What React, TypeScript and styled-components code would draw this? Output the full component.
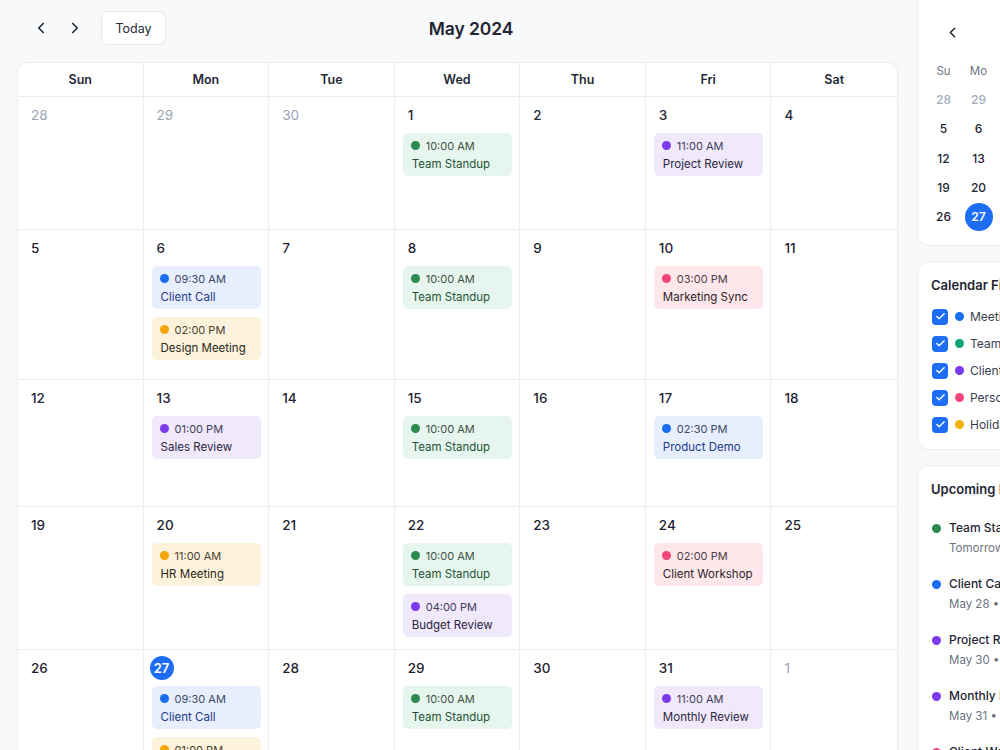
import React from "react";
import styled, { createGlobalStyle } from "styled-components";
import { ChevronLeft, ChevronRight, Check } from "lucide-react";

type Tone = "green" | "blue" | "purple" | "yellow" | "pink";

const tones: Record<Tone, { bg: string; dot: string; title: string; time: string }> = {
  green: { bg: "#e6f6ee", dot: "#2f8a52", title: "#1f5236", time: "#3f5147" },
  blue: { bg: "#e7eefd", dot: "#1a6cf2", title: "#1e3a8a", time: "#3d4a66" },
  purple: { bg: "#f0e9fc", dot: "#7c3aed", title: "#2a2540", time: "#433d57" },
  yellow: { bg: "#fdf3dc", dot: "#f5a50b", title: "#2c2619", time: "#4a4230" },
  pink: { bg: "#fde7eb", dot: "#f0467a", title: "#2b2327", time: "#4d3f45" },
};

type CalEvent = { time: string; title: string; tone: Tone };
type Day = { n: number; out?: boolean; today?: boolean; events?: CalEvent[] };

const standup: CalEvent = { time: "10:00 AM", title: "Team Standup", tone: "green" };

const weeks: { height: number; days: Day[] }[] = [
  {
    height: 133,
    days: [
      { n: 28, out: true },
      { n: 29, out: true },
      { n: 30, out: true },
      { n: 1, events: [standup] },
      { n: 2 },
      { n: 3, events: [{ time: "11:00 AM", title: "Project Review", tone: "purple" }] },
      { n: 4 },
    ],
  },
  {
    height: 150,
    days: [
      { n: 5 },
      {
        n: 6,
        events: [
          { time: "09:30 AM", title: "Client Call", tone: "blue" },
          { time: "02:00 PM", title: "Design Meeting", tone: "yellow" },
        ],
      },
      { n: 7 },
      { n: 8, events: [standup] },
      { n: 9 },
      { n: 10, events: [{ time: "03:00 PM", title: "Marketing Sync", tone: "pink" }] },
      { n: 11 },
    ],
  },
  {
    height: 127,
    days: [
      { n: 12 },
      { n: 13, events: [{ time: "01:00 PM", title: "Sales Review", tone: "purple" }] },
      { n: 14 },
      { n: 15, events: [standup] },
      { n: 16 },
      { n: 17, events: [{ time: "02:30 PM", title: "Product Demo", tone: "blue" }] },
      { n: 18 },
    ],
  },
  {
    height: 143,
    days: [
      { n: 19 },
      { n: 20, events: [{ time: "11:00 AM", title: "HR Meeting", tone: "yellow" }] },
      { n: 21 },
      {
        n: 22,
        events: [standup, { time: "04:00 PM", title: "Budget Review", tone: "purple" }],
      },
      { n: 23 },
      { n: 24, events: [{ time: "02:00 PM", title: "Client Workshop", tone: "pink" }] },
      { n: 25 },
    ],
  },
  {
    height: 150,
    days: [
      { n: 26 },
      {
        n: 27,
        today: true,
        events: [
          { time: "09:30 AM", title: "Client Call", tone: "blue" },
          { time: "01:00 PM", title: "Lunch & Learn", tone: "yellow" },
        ],
      },
      { n: 28 },
      { n: 29, events: [standup] },
      { n: 30 },
      { n: 31, events: [{ time: "11:00 AM", title: "Monthly Review", tone: "purple" }] },
      { n: 1, out: true },
    ],
  },
];

const dayNames = ["Sun", "Mon", "Tue", "Wed", "Thu", "Fri", "Sat"];
const miniNames = ["Su", "Mo", "Tu", "We", "Th", "Fr", "Sa"];

const miniDays: Day[] = [
  { n: 28, out: true },
  { n: 29, out: true },
  { n: 30, out: true },
  ...Array.from({ length: 31 }, (_, i) => ({ n: i + 1, today: i + 1 === 27 })),
  { n: 1, out: true },
];

const filters: { label: string; color: string }[] = [
  { label: "Meetings", color: "#1a6cf2" },
  { label: "Team Events", color: "#10a37a" },
  { label: "Client Work", color: "#7c3aed" },
  { label: "Personal", color: "#f0467a" },
  { label: "Holidays", color: "#f5b00b" },
];

const upcoming: { title: string; when: string; color: string }[] = [
  { title: "Team Standup", when: "Tomorrow, 10:00 AM", color: "#2f8a52" },
  { title: "Client Call", when: "May 28 • 09:30 AM", color: "#1a6cf2" },
  { title: "Project Review", when: "May 30 • 11:00 AM", color: "#7c3aed" },
  { title: "Monthly Review", when: "May 31 • 11:00 AM", color: "#7c3aed" },
  { title: "Client Workshop", when: "Jun 3 • 02:00 PM", color: "#f0467a" },
];

const App = () => {
  return (
    <>
      <GlobalStyle />
      <Page>
        <Main>
          <Header>
            <NavGroup>
              <IconButton aria-label="Previous month">
                <ChevronLeft size={18} strokeWidth={2.2} />
              </IconButton>
              <IconButton aria-label="Next month">
                <ChevronRight size={18} strokeWidth={2.2} />
              </IconButton>
              <TodayButton>Today</TodayButton>
            </NavGroup>
            <MonthTitle>May 2024</MonthTitle>
            <div />
          </Header>

          <Grid>
            <HeadRow>
              {dayNames.map((d) => (
                <HeadCell key={d}>{d}</HeadCell>
              ))}
            </HeadRow>
            {weeks.map((w, wi) => (
              <Week key={wi} $height={w.height}>
                {w.days.map((d, di) => (
                  <Cell key={di}>
                    {d.today ? (
                      <TodayNum>{d.n}</TodayNum>
                    ) : (
                      <DateNum $out={d.out}>{d.n}</DateNum>
                    )}
                    {d.events?.map((e, ei) => (
                      <EventCard key={ei} $tone={e.tone}>
                        <EventTime $tone={e.tone}>
                          <Dot $color={tones[e.tone].dot} />
                          {e.time}
                        </EventTime>
                        <EventTitle $tone={e.tone}>{e.title}</EventTitle>
                      </EventCard>
                    ))}
                  </Cell>
                ))}
              </Week>
            ))}
          </Grid>
        </Main>

        <Sidebar>
          <MiniCard>
            <MiniHeader>
              <MiniNav aria-label="Previous">
                <ChevronLeft size={17} strokeWidth={2.2} />
              </MiniNav>
              <MiniTitle>May 2024</MiniTitle>
              <MiniNav aria-label="Next">
                <ChevronRight size={17} strokeWidth={2.2} />
              </MiniNav>
            </MiniHeader>
            <MiniGrid>
              {miniNames.map((n) => (
                <MiniHead key={n}>{n}</MiniHead>
              ))}
              {miniDays.map((d, i) => (
                <MiniDay key={i} $out={d.out}>
                  {d.today ? <MiniToday>{d.n}</MiniToday> : d.n}
                </MiniDay>
              ))}
            </MiniGrid>
          </MiniCard>

          <Card>
            <CardTitle>Calendar Filters</CardTitle>
            <FilterList>
              {filters.map((f) => (
                <FilterRow key={f.label}>
                  <CheckBox>
                    <Check size={11} strokeWidth={3} color="#fff" />
                  </CheckBox>
                  <Dot $color={f.color} />
                  <FilterLabel>{f.label}</FilterLabel>
                </FilterRow>
              ))}
            </FilterList>
          </Card>

          <Card>
            <CardTitle>Upcoming Events</CardTitle>
            <UpcomingList>
              {upcoming.map((u) => (
                <UpcomingItem key={u.title}>
                  <UpcomingDot $color={u.color} />
                  <div>
                    <UpcomingTitle>{u.title}</UpcomingTitle>
                    <UpcomingWhen>{u.when}</UpcomingWhen>
                  </div>
                </UpcomingItem>
              ))}
            </UpcomingList>
          </Card>
        </Sidebar>
      </Page>
    </>
  );
};

export default App;

const GlobalStyle = createGlobalStyle`
  html, body {
    margin: 0;
    padding: 0;
    background: #f8f9fb;
    overflow: hidden;
    font-family: Inter, "Noto Sans", sans-serif;
    color: #1f2937;
    -webkit-font-smoothing: antialiased;
  }
  * { box-sizing: border-box; }
`;

const Page = styled.div`
  display: flex;
  align-items: flex-start;
  gap: 19px;
  width: 1200px;
  padding-left: 17px;
`;

const Main = styled.main`
  width: 881px;
  flex-shrink: 0;
  padding-top: 11px;
`;

const Header = styled.header`
  display: grid;
  grid-template-columns: 1fr auto 1fr;
  align-items: center;
  height: 33px;
  margin-bottom: 18px;
`;

const NavGroup = styled.div`
  display: flex;
  align-items: center;
  gap: 2px;
  padding-left: 8px;
`;

const IconButton = styled.button`
  display: flex;
  align-items: center;
  justify-content: center;
  width: 32px;
  height: 32px;
  border: none;
  background: transparent;
  color: #1f2937;
  padding: 0;
  cursor: pointer;
`;

const TodayButton = styled.button`
  margin-left: 8px;
  width: 65px;
  height: 34px;
  border: 1px solid #e4e7ec;
  border-radius: 7px;
  background: #ffffff;
  font-family: Inter, sans-serif;
  font-size: 12.5px;
  font-weight: 400;
  color: #1f2937;
  cursor: pointer;
`;

const MonthTitle = styled.h1`
  margin: 0;
  padding-left: 27px;
  font-size: 17.5px;
  font-weight: 600;
  color: #1f2533;
  letter-spacing: -0.1px;
`;

const Grid = styled.section`
  background: #ffffff;
  border: 1px solid #e9ecf1;
  border-radius: 10px 10px 0 0;
  overflow: hidden;
`;

const HeadRow = styled.div`
  display: grid;
  grid-template-columns: repeat(7, minmax(0, 1fr));
  height: 34px;
  border-bottom: 1px solid #e9ecf1;
`;

const HeadCell = styled.div`
  display: flex;
  align-items: center;
  justify-content: center;
  font-size: 12.5px;
  font-weight: 600;
  color: #1f2937;
  border-right: 1px solid #eceef2;

  &:last-child {
    border-right: none;
  }
`;

const Week = styled.div<{ $height: number }>`
  display: grid;
  grid-template-columns: repeat(7, minmax(0, 1fr));
  height: ${({ $height }) => $height}px;
  border-bottom: 1px solid #e9ecf1;
`;

const Cell = styled.div`
  display: flex;
  flex-direction: column;
  gap: 8px;
  min-width: 0;
  padding: 8px 7px 0 8px;
  border-right: 1px solid #eceef2;

  &:last-child {
    border-right: none;
  }
`;

const DateNum = styled.div<{ $out?: boolean }>`
  height: 20px;
  line-height: 20px;
  padding-left: 5px;
  font-size: 13.5px;
  font-weight: ${({ $out }) => ($out ? 400 : 500)};
  color: ${({ $out }) => ($out ? "#97a3b6" : "#1f2533")};
`;

const TodayNum = styled.div`
  display: flex;
  align-items: center;
  justify-content: center;
  width: 24px;
  height: 24px;
  margin: -2px 0 -2px -2px;
  border-radius: 50%;
  background: #1d6ef5;
  color: #ffffff;
  font-size: 13px;
  font-weight: 600;
`;

const EventCard = styled.div<{ $tone: Tone }>`
  display: flex;
  flex-direction: column;
  gap: 2px;
  height: 43px;
  padding: 5px 9px 0;
  border-radius: 5px;
  background: ${({ $tone }) => tones[$tone].bg};
`;

const EventTime = styled.div<{ $tone: Tone }>`
  display: flex;
  align-items: center;
  gap: 6px;
  height: 15px;
  margin-left: -1px;
  font-size: 11px;
  color: ${({ $tone }) => tones[$tone].time};
`;

const EventTitle = styled.div<{ $tone: Tone }>`
  height: 18px;
  line-height: 18px;
  font-size: 11.5px;
  font-weight: 400;
  white-space: nowrap;
  color: ${({ $tone }) => tones[$tone].title};
`;

const Dot = styled.span<{ $color: string }>`
  display: inline-block;
  flex-shrink: 0;
  width: 9px;
  height: 9px;
  border-radius: 50%;
  background: ${({ $color }) => $color};
`;

const Sidebar = styled.aside`
  display: flex;
  flex-direction: column;
  gap: 15px;
  width: 262px;
  flex-shrink: 0;
  margin-top: -12px;
`;

const Card = styled.div`
  background: #ffffff;
  border: 1px solid #e9ecf1;
  border-radius: 12px;
  padding: 14px 14px 11px 13px;
`;

const MiniCard = styled(Card)`
  padding: 28px 8px 14px;
`;

const MiniHeader = styled.div`
  display: flex;
  align-items: center;
  justify-content: space-between;
  height: 30px;
  padding: 0 8px;
  margin-bottom: 9px;
`;

const MiniNav = styled.button`
  display: flex;
  align-items: center;
  justify-content: center;
  width: 36px;
  height: 30px;
  border: none;
  background: transparent;
  color: #1f2937;
  padding: 0;
`;

const MiniTitle = styled.div`
  font-size: 13px;
  font-weight: 600;
`;

const MiniGrid = styled.div`
  display: grid;
  grid-template-columns: repeat(7, 35px);
  grid-template-rows: 29px;
  grid-auto-rows: 29.25px;
`;

const MiniHead = styled.div`
  display: flex;
  align-items: center;
  justify-content: center;
  font-size: 11.5px;
  color: #6b7280;
`;

const MiniDay = styled.div<{ $out?: boolean }>`
  display: flex;
  align-items: center;
  justify-content: center;
  font-size: 12px;
  font-weight: 500;
  color: ${({ $out }) => ($out ? "#a3adbd" : "#1f2533")};
`;

const MiniToday = styled.span`
  display: flex;
  align-items: center;
  justify-content: center;
  width: 28px;
  height: 28px;
  border-radius: 50%;
  background: #1d6ef5;
  color: #ffffff;
  font-weight: 600;
`;

const CardTitle = styled.h3`
  margin: 0;
  height: 18px;
  line-height: 18px;
  font-size: 13px;
  font-weight: 600;
  color: #1f2533;
  white-space: nowrap;
`;

const FilterList = styled.div`
  display: flex;
  flex-direction: column;
  margin-top: 9px;
`;

const FilterRow = styled.label`
  display: flex;
  align-items: center;
  height: 27px;
  padding-left: 1px;
`;

const CheckBox = styled.span`
  display: flex;
  align-items: center;
  justify-content: center;
  width: 16px;
  height: 16px;
  margin-right: 7px;
  border-radius: 4px;
  background: #1d6ef5;
`;

const FilterLabel = styled.span`
  margin-left: 6px;
  font-size: 12px;
  color: #374151;
  white-space: nowrap;
`;

const UpcomingList = styled.div`
  display: flex;
  flex-direction: column;
  gap: 19px;
  margin-top: 21px;
`;

const UpcomingItem = styled.div`
  display: flex;
  align-items: flex-start;
  gap: 8px;
  padding-left: 1px;
`;

const UpcomingDot = styled(Dot)`
  margin-top: 5px;
`;

const UpcomingTitle = styled.div`
  height: 18px;
  line-height: 18px;
  font-size: 12px;
  font-weight: 500;
  color: #1f2533;
  white-space: nowrap;
`;

const UpcomingWhen = styled.div`
  margin-top: 3px;
  height: 16px;
  line-height: 16px;
  font-size: 11.5px;
  color: #6b7280;
  white-space: nowrap;
`;
